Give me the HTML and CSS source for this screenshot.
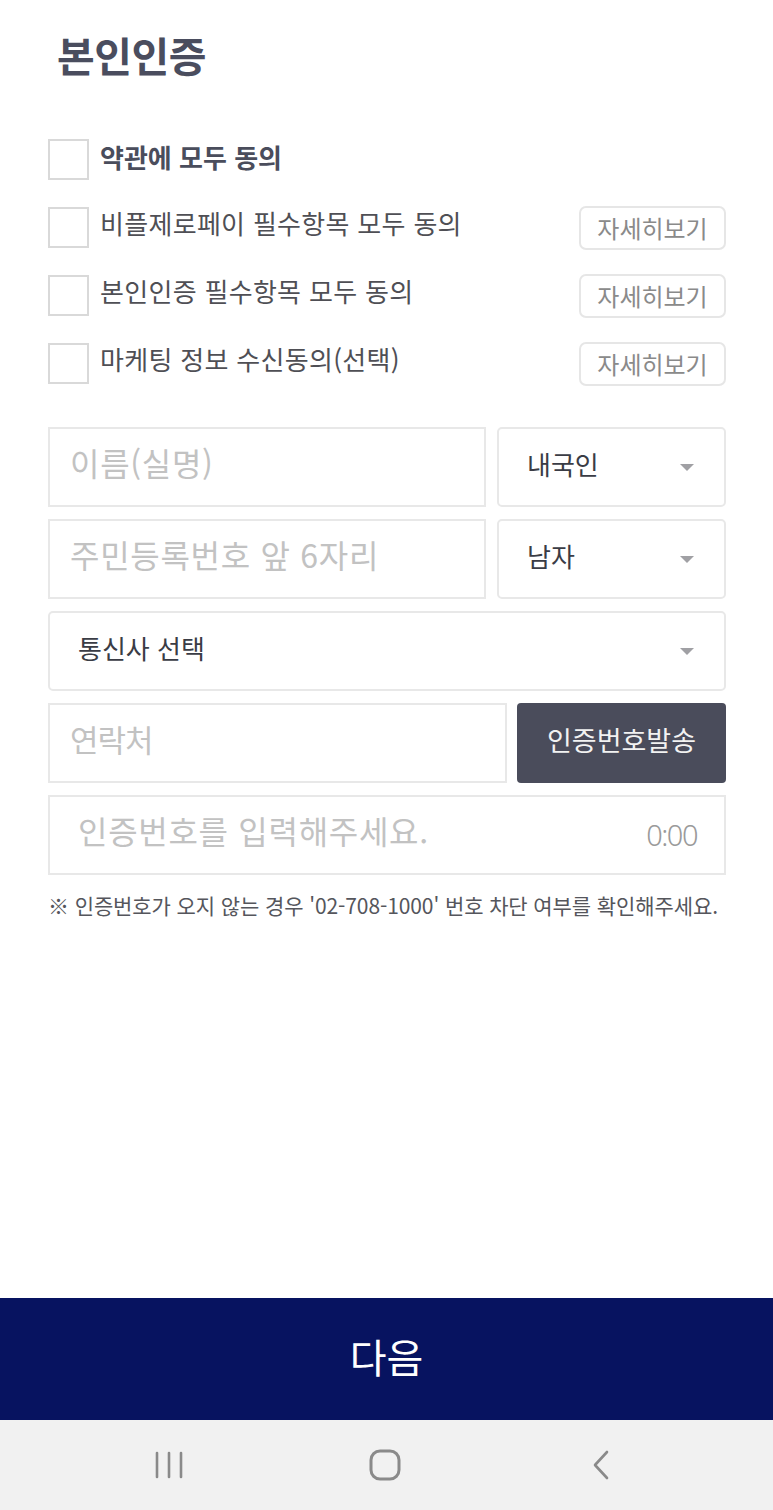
FILE: index.html
```html
<!DOCTYPE html>
<html lang="ko">
<head>
<meta charset="utf-8">
<title>본인인증</title>
<link rel="stylesheet" href="styles.css">
</head>
<body>
<div class="app">
  <main class="page">
    <h1 class="title">본인인증</h1>

    <ul class="agree-list">
      <li class="agree-row">
        <span class="check"></span>
        <span class="agree-label strong">약관에 모두 동의</span>
      </li>
      <li class="agree-row">
        <span class="check"></span>
        <span class="agree-label">비플제로페이 필수항목 모두 동의</span>
        <button class="detail-btn">자세히보기</button>
      </li>
      <li class="agree-row">
        <span class="check"></span>
        <span class="agree-label">본인인증 필수항목 모두 동의</span>
        <button class="detail-btn">자세히보기</button>
      </li>
      <li class="agree-row">
        <span class="check"></span>
        <span class="agree-label">마케팅 정보 수신동의(선택)</span>
        <button class="detail-btn">자세히보기</button>
      </li>
    </ul>

    <div class="form">
      <div class="row row-select">
        <div class="field"><span class="ph">이름(실명)</span></div>
        <div class="field select"><span class="val">내국인</span><span class="caret"></span></div>
      </div>
      <div class="row row-select">
        <div class="field"><span class="ph">주민등록번호 앞 6자리</span></div>
        <div class="field select"><span class="val">남자</span><span class="caret"></span></div>
      </div>
      <div class="field select wide"><span class="val">통신사 선택</span><span class="caret"></span></div>
      <div class="row row-send">
        <div class="field"><span class="ph tight">연락처</span></div>
        <button class="send-btn">인증번호발송</button>
      </div>
      <div class="field code"><span class="ph">인증번호를 입력해주세요.</span><span class="timer">0:00</span></div>
      <p class="note">※ 인증번호가 오지 않는 경우 '02-708-1000' 번호 차단 여부를 확인해주세요.</p>
    </div>
  </main>

  <button class="next-btn">다음</button>

  <nav class="navbar">
    <svg class="nav-icon" width="30" height="30" viewBox="0 0 30 30" aria-hidden="true">
      <g stroke="#8a8a8a" stroke-width="2.6" stroke-linecap="round">
        <line x1="3" y1="3" x2="3" y2="27"/>
        <line x1="15" y1="3" x2="15" y2="27"/>
        <line x1="27" y1="3" x2="27" y2="27"/>
      </g>
    </svg>
    <svg class="nav-icon" width="32" height="32" viewBox="0 0 32 32" aria-hidden="true">
      <rect x="2" y="2" width="28" height="28" rx="9" fill="none" stroke="#8a8a8a" stroke-width="3"/>
    </svg>
    <svg class="nav-icon" width="20" height="30" viewBox="0 0 20 30" aria-hidden="true">
      <polyline points="16,2 4,15 16,28" fill="none" stroke="#8a8a8a" stroke-width="2.6" stroke-linecap="round" stroke-linejoin="round"/>
    </svg>
  </nav>
</div>
</body>
</html>
```

FILE: styles.css
```css
* { box-sizing: border-box; }
html, body { margin: 0; padding: 0; background: #fff; }
body {
  font-family: "Noto Sans CJK KR", "Noto Sans", "Liberation Sans", sans-serif;
  color: #4a4d5c;
}
.app {
  display: flex;
  flex-direction: column;
  min-height: 100vh;
}
.page {
  padding: 0 47px 0 48px;
}
.title {
  margin: 27px 0 0 9px;
  font-size: 41px;
  line-height: 54px;
  font-weight: 700;
  color: #4a4d5e;
  letter-spacing: -0.5px;
}
.agree-list {
  list-style: none;
  margin: 58px 0 0;
  padding: 0;
  display: flex;
  flex-direction: column;
  gap: 27px;
}
.agree-row {
  display: flex;
  align-items: center;
  height: 41px;
}
.check {
  width: 41px;
  height: 41px;
  border: 2px solid #d9d9d9;
  background: #fff;
  flex: none;
}
.agree-label {
  margin-left: 11px;
  font-size: 26px;
  line-height: 30px;
  color: #4f4f55;
  letter-spacing: 0.3px;
  flex: 1;
  position: relative;
  top: -5px;
}
.agree-label.strong {
  font-weight: 700;
  color: #4a4d5c;
  letter-spacing: 0;
  top: -3px;
}
.detail-btn {
  flex: none;
  width: 147px;
  height: 44px;
  border: 2px solid #e6e6e6;
  border-radius: 7px;
  background: #fff;
  font-family: inherit;
  font-size: 24px;
  color: #8a8a8a;
  padding: 0;
  line-height: 1;
}
.form {
  margin-top: 43px;
  display: flex;
  flex-direction: column;
  gap: 12px;
}
.row {
  display: grid;
  height: 80px;
}
.row-select {
  grid-template-columns: 1fr 229px;
  gap: 11px;
}
.row-send {
  grid-template-columns: 1fr 209px;
  gap: 10px;
}
.field {
  height: 80px;
  border: 2px solid #e8e8e8;
  display: flex;
  align-items: center;
  padding-left: 20px;
  background: #fff;
}
.ph {
  font-size: 32px;
  color: #c2c2c2;
  letter-spacing: 0.7px;
  position: relative;
  top: -5px;
}
.ph.tight {
  font-size: 31px;
  letter-spacing: -1px;
}
.select {
  border-radius: 5px;
  padding: 0 30px 0 28px;
  justify-content: space-between;
}
.val {
  font-size: 26px;
  color: #3a3c45;
  position: relative;
  top: -4px;
}
.caret {
  width: 0;
  height: 0;
  border-left: 7px solid transparent;
  border-right: 7px solid transparent;
  border-top: 7px solid #a0a0a4;
}
.send-btn {
  height: 80px;
  border: none;
  border-radius: 4px;
  background: #4a4c5b;
  color: #f2f2f2;
  font-family: inherit;
  font-size: 27px;
  padding: 0 0 8px;
}
.code {
  padding: 0 27px 0 28px;
  justify-content: space-between;
}
.timer {
  font-size: 29px;
  color: #9a9a9a;
  font-family: "Noto Sans", "Liberation Sans", sans-serif;
  font-weight: 300;
  letter-spacing: -1.5px;
  position: relative;
  top: -1px;
}
.note {
  margin: 3px 0 0;
  font-size: 21px;
  color: #55565c;
  letter-spacing: -0.1px;
  white-space: nowrap;
}
.next-btn {
  margin-top: auto;
  height: 122px;
  border: none;
  background: #071360;
  color: #fff;
  font-family: inherit;
  font-size: 40px;
  padding: 0 0 6px;
}
.navbar {
  height: 90px;
  background: #f1f1f1;
  display: grid;
  grid-template-columns: repeat(3, 1fr);
  justify-items: center;
  align-items: center;
  padding: 0 64px 0 61px;
}
.nav-icon { display: block; }
```
